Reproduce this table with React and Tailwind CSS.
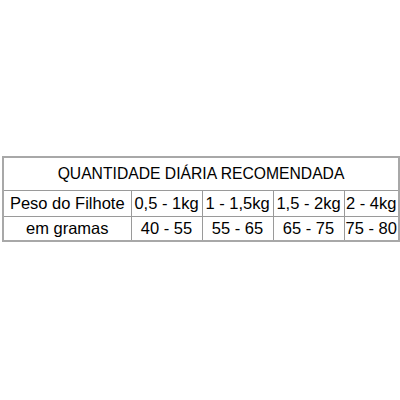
export default function App() {
  const sizes = ['0,5 - 1kg', '1 - 1,5kg', '1,5 - 2kg', '2 - 4kg'];
  const grams = ['40 - 55', '55 - 65', '65 - 75', '75 - 80'];

  return (
    <div className="w-[400px] h-[400px] bg-white pt-[156px] pl-[2px] font-['Liberation_Sans',Arial,sans-serif] text-black text-[16.5px]">
      <table className="border-collapse border-2 border-[#a8a8a8] w-[396px] table-fixed">
        <colgroup>
          <col className="w-[128px]" />
          <col className="w-[71px]" />
          <col className="w-[71px]" />
          <col className="w-[71px]" />
          <col className="w-[55px]" />
        </colgroup>
        <tbody>
          <tr className="h-[33px]">
            <td colSpan={5} className="text-center text-[15.7px] border border-[#9a9a9a] leading-none">
              QUANTIDADE DIÁRIA RECOMENDADA
            </td>
          </tr>
          <tr className="h-[26px]">
            <td className="text-center border border-[#9a9a9a] whitespace-nowrap leading-none">Peso do Filhote</td>
            {sizes.map((s) => (
              <td key={s} className="text-center border border-[#9a9a9a] whitespace-nowrap leading-none">
                {s}
              </td>
            ))}
          </tr>
          <tr className="h-[25px]">
            <td className="text-center border border-[#9a9a9a] whitespace-nowrap leading-none">em gramas</td>
            {grams.map((g) => (
              <td key={g} className="text-center border border-[#9a9a9a] whitespace-nowrap leading-none">
                {g}
              </td>
            ))}
          </tr>
        </tbody>
      </table>
    </div>
  );
}
